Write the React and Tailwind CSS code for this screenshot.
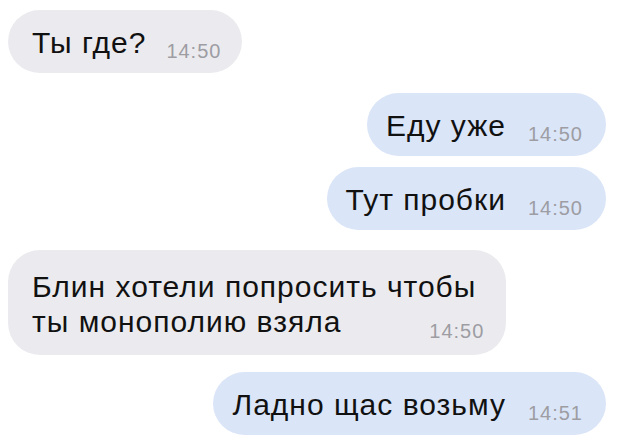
import React from 'react';

const messages = [
  { id: 1, out: false, text: 'Ты где?', time: '14:50' },
  { id: 2, out: true, text: 'Еду уже', time: '14:50' },
  { id: 3, out: true, text: 'Тут пробки', time: '14:50' },
  { id: 4, out: false, lines: ['Блин хотели попросить чтобы', 'ты монополию взяла'], time: '14:50' },
  { id: 5, out: true, text: 'Ладно щас возьму', time: '14:51' },
];

const gaps = ['', 'mt-[20px]', 'mt-[11px]', 'mt-[20px]', 'mt-[17px]'];

function Time({ children, className = '' }) {
  return (
    <span className={`text-[20px] leading-[20px] tracking-[1px] text-[#9d9da3] ${className}`}>
      {children}
    </span>
  );
}

function Bubble({ msg }) {
  const color = msg.out ? 'bg-[#dae5f8]' : 'bg-[#ebebef]';

  if (msg.lines) {
    return (
      <div className={`${color} rounded-[32px] pl-6 pr-[30px] pt-[19px] pb-[16px] text-[30px] leading-[35px] tracking-[1px]`}>
        <div>{msg.lines[0]}</div>
        <div className="flex items-end justify-between">
          <span>{msg.lines[1]}</span>
          <Time className="mr-[-8px] mb-[-2px]">{msg.time}</Time>
        </div>
      </div>
    );
  }

  return (
    <div
      className={`${color} rounded-full pt-[16px] pb-[13px] flex items-end ${
        msg.out ? 'pl-[19px] pr-[23px]' : 'pl-6 pr-[21px]'
      }`}
    >
      <span className="text-[30px] leading-[34px] tracking-[1px]">{msg.text}</span>
      <Time className={`${msg.out ? 'ml-[22px]' : 'ml-5'} mb-[-1px]`}>{msg.time}</Time>
    </div>
  );
}

export default function App() {
  return (
    <div
      className="w-[620px] h-[443px] bg-white text-[#111] pl-2 pr-[14px] pt-[10px] flex flex-col overflow-hidden"
      style={{ fontFamily: '"Liberation Sans", Arial, sans-serif' }}
    >
      {messages.map((m, i) => (
        <div key={m.id} className={`flex ${m.out ? 'justify-end' : 'justify-start'} ${gaps[i]}`}>
          <Bubble msg={m} />
        </div>
      ))}
    </div>
  );
}
